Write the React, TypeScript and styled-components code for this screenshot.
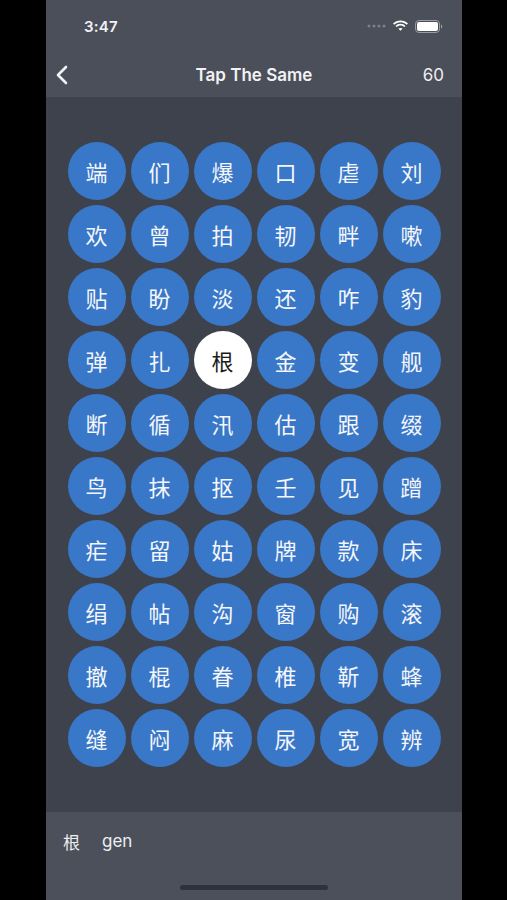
import React from "react";
import styled, { createGlobalStyle } from "styled-components";

const GlobalStyle = createGlobalStyle`
  html, body {
    margin: 0;
    padding: 0;
    background: #000000;
  }
  body {
    font-family: Inter, "Noto Sans", "Noto Sans CJK SC", sans-serif;
  }
`;

const Page = styled.div`
  display: flex;
  justify-content: flex-start;
  width: 507px;
  height: 900px;
  padding-left: 46px;
  box-sizing: border-box;
  background: #000000;
`;

const Phone = styled.div`
  display: flex;
  flex-direction: column;
  width: 416px;
  height: 900px;
  overflow: hidden;
`;

const Top = styled.div`
  display: flex;
  flex-direction: column;
  height: 97px;
  background: #4b4f5a;
`;

const StatusBar = styled.div`
  display: flex;
  align-items: center;
  justify-content: space-between;
  height: 52px;
  padding: 0 19px 0 38px;
  box-sizing: border-box;
`;

const Clock = styled.span`
  color: #f2f2f4;
  font-size: 15px;
  font-weight: 600;
  letter-spacing: 0.2px;
`;

const StatusIcons = styled.div`
  display: flex;
  align-items: center;
  gap: 6px;
`;

const NavBar = styled.div`
  display: grid;
  grid-template-columns: 70px 1fr 61px;
  align-items: center;
  height: 45px;
  padding: 0 18px 0 9px;
  box-sizing: border-box;
`;

const Title = styled.span`
  color: #f2f2f4;
  font-size: 17px;
  font-weight: 600;
  text-align: center;
`;

const Count = styled.span`
  color: #eeeef0;
  font-size: 17px;
  text-align: right;
`;

const Board = styled.div`
  display: flex;
  align-items: center;
  justify-content: center;
  height: 715px;
  background: #3e424d;
`;

const Grid = styled.div`
  display: grid;
  grid-template-columns: repeat(6, 58px);
  grid-auto-rows: 58px;
  gap: 5px;
`;

const Bubble = styled.div<{ $active?: boolean }>`
  display: flex;
  align-items: center;
  justify-content: center;
  border-radius: 50%;
  background: ${(p) => (p.$active ? "#ffffff" : "#3977c8")};
  color: ${(p) => (p.$active ? "#1b1b1b" : "#f4f6fa")};
  font-family: "Noto Sans CJK SC", sans-serif;
  font-size: 22px;
  line-height: 1;
`;

const Bottom = styled.div`
  display: flex;
  flex-direction: column;
  flex: 1;
  background: #4c505b;
`;

const Answer = styled.div`
  display: flex;
  align-items: center;
  gap: 22px;
  height: 58px;
  padding: 0 0 0 17px;
  color: #eeeef0;
  font-size: 17px;
`;

const Hanzi = styled.span`
  font-family: "Noto Sans CJK SC", sans-serif;
  font-size: 17px;
`;

const HomeBar = styled.div`
  align-self: center;
  width: 148px;
  height: 5px;
  margin-top: 15px;
  border-radius: 3px;
  background: #2f323a;
`;

const rows = [
  "端们爆口虐刘",
  "欢曾拍韧畔嗽",
  "贴盼淡还咋豹",
  "弹扎根金变舰",
  "断循汛估跟缀",
  "鸟抹抠壬见蹭",
  "疟留姑牌款床",
  "绢帖沟窗购滚",
  "撤棍眷椎靳蜂",
  "缝闷麻尿宽辨",
];

const Wifi = () => (
  <svg width="17" height="12" viewBox="0 0 17 12">
    <path d="M8.5 2.2c2.4 0 4.6.9 6.3 2.5l1.2-1.2C14 1.5 11.4.4 8.5.4S3 1.5 1 3.5l1.2 1.2C3.9 3.1 6.1 2.2 8.5 2.2z" fill="#fff" />
    <path d="M8.5 5.6c1.5 0 2.8.6 3.8 1.5l1.2-1.2C12.2 4.6 10.4 3.8 8.5 3.8S4.8 4.6 3.5 5.9l1.2 1.2c1-.9 2.3-1.5 3.8-1.5z" fill="#fff" />
    <path d="M8.5 9.2l2.1-2.1c-.6-.5-1.3-.8-2.1-.8s-1.5.3-2.1.8L8.5 9.2z" fill="#fff" transform="translate(0 1.6)" />
  </svg>
);

const Battery = () => (
  <svg width="28" height="13" viewBox="0 0 28 13">
    <rect x="0.5" y="0.5" width="24" height="12" rx="3.5" fill="none" stroke="#9a9ca3" />
    <rect x="2" y="2" width="21" height="9" rx="2" fill="#fff" />
    <path d="M26 4.5v4c.8-.3 1.3-1.1 1.3-2s-.5-1.7-1.3-2z" fill="#9a9ca3" />
  </svg>
);

const Dots = () => (
  <svg width="19" height="4" viewBox="0 0 19 4">
    {[0, 5, 10, 15].map((x) => (
      <circle key={x} cx={x + 2} cy="2" r="1.5" fill="#7d808a" />
    ))}
  </svg>
);

const Back = () => (
  <svg width="14" height="20" viewBox="0 0 14 20">
    <path d="M11 2L3 10l8 8" fill="none" stroke="#f2f2f4" strokeWidth="2.6" strokeLinecap="round" strokeLinejoin="round" />
  </svg>
);

export default function App() {
  return (
    <Page>
      <GlobalStyle />
      <Phone>
        <Top>
          <StatusBar>
            <Clock>3:47</Clock>
            <StatusIcons>
              <Dots />
              <Wifi />
              <Battery />
            </StatusIcons>
          </StatusBar>
          <NavBar>
            <Back />
            <Title>Tap The Same</Title>
            <Count>60</Count>
          </NavBar>
        </Top>
        <Board>
          <Grid>
            {rows.flatMap((row, r) =>
              Array.from(row).map((ch, c) => (
                <Bubble key={`${r}-${c}`} $active={r === 3 && c === 2}>
                  {ch}
                </Bubble>
              ))
            )}
          </Grid>
        </Board>
        <Bottom>
          <Answer>
            <Hanzi>根</Hanzi>
            <span>gen</span>
          </Answer>
          <HomeBar />
        </Bottom>
      </Phone>
    </Page>
  );
}
